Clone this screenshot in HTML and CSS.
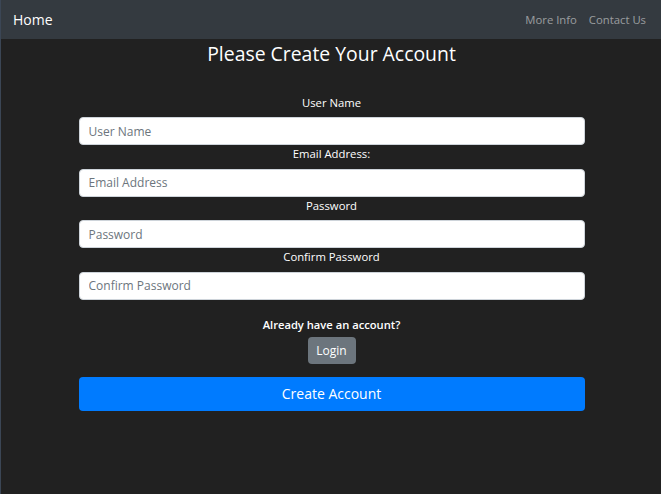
FILE: index.html
```html
<!DOCTYPE html>
<html>
<head>
<meta charset="utf-8">
<link rel="stylesheet" href="styles.css">
</head>
<body>
<nav class="navbar">
  <a class="brand" href="#">Home</a>
  <div class="nav-links">
    <a href="#">More Info</a>
    <a href="#">Contact Us</a>
  </div>
</nav>
<main class="page">
  <h2 class="title">Please Create Your Account</h2>
  <form class="form">
    <label class="label">User Name</label>
    <input class="input" type="text" placeholder="User Name">
    <label class="label">Email Address:</label>
    <input class="input" type="email" placeholder="Email Address">
    <label class="label">Password</label>
    <input class="input" type="password" placeholder="Password">
    <label class="label">Confirm Password</label>
    <input class="input" type="password" placeholder="Confirm Password">
    <p class="already">Already have an account?</p>
    <div class="login-row"><button type="button" class="btn-login">Login</button></div>
    <button type="button" class="btn-create">Create Account</button>
  </form>
</main>
</body>
</html>
```
FILE: styles.css
```css
html, body {
  margin: 0;
  padding: 0;
  height: 100%;
}
body {
  background: #212121;
  color: #fff;
  font-family: "Segoe UI", "Open Sans", sans-serif;
  border-left: 1px solid #3b4655;
  box-sizing: border-box;
}
.navbar {
  height: 39px;
  background: #343a40;
  display: flex;
  align-items: center;
  justify-content: space-between;
  padding: 0 15px 0 12px;
}
.brand {
  color: #fff;
  text-decoration: none;
  font-size: 14px;
}
.nav-links {
  display: flex;
  gap: 12px;
}
.nav-links a {
  color: rgba(255,255,255,0.5);
  text-decoration: none;
  font-size: 11.3px;
}
.page {
  display: flex;
  flex-direction: column;
  align-items: center;
  padding-left: 1px;
}
.title {
  margin: 2px 0 0;
  font-weight: 400;
  font-size: 19.4px;
  line-height: 26px;
}
.form {
  width: 506px;
  display: flex;
  flex-direction: column;
  margin-top: 27px;
}
.label {
  display: block;
  text-align: center;
  font-size: 11.3px;
  line-height: 18px;
  font-weight: 500;
  margin-bottom: 5.4px;
}
.input {
  box-sizing: border-box;
  height: 28px;
  width: 100%;
  border: 1px solid #ced4da;
  border-radius: 4px;
  background: #fff;
  padding: 0 9px;
  font-family: inherit;
  font-size: 12px;
  color: #495057;
  outline: none;
}
.input::placeholder {
  color: #6c757d;
}
.already {
  margin: 16px 0 0;
  text-align: center;
  font-size: 11.2px;
  line-height: 18px;
  font-weight: 600;
}
.login-row {
  display: flex;
  justify-content: center;
  margin-top: 3px;
}
.btn-login {
  height: 27px;
  width: 48px;
  border: none;
  border-radius: 4px;
  background: #6c757d;
  color: #fff;
  font-family: inherit;
  font-size: 12px;
  padding: 0;
}
.btn-create {
  margin-top: 13px;
  height: 34px;
  width: 100%;
  border: none;
  border-radius: 4px;
  background: #007bff;
  color: #fff;
  font-family: inherit;
  font-size: 14px;
  padding: 0;
}
```
